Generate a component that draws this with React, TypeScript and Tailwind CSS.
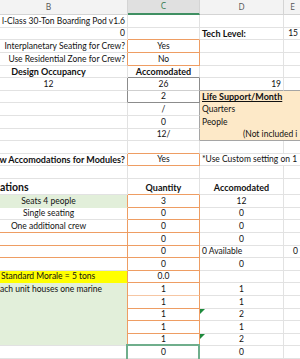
import React from 'react';

type P = { className?: string; children?: React.ReactNode };

function Cell({ className = '', children }: P) {
  return (
    <div className={`relative flex shrink-0 items-center overflow-hidden whitespace-nowrap border-b border-r ${className}`}>
      {children}
    </div>
  );
}

function Row({ className = 'h-[12.6px]', children }: P) {
  return <div className={`flex ${className}`}>{children}</div>;
}

function Tri() {
  return (
    <svg className="absolute left-0 top-0" width="5" height="5" viewBox="0 0 5 5">
      <polygon points="0,0 5,0 0,5" fill="#1e8a3c" />
    </svg>
  );
}

// widths: B 158 (starts at -30), C 72, D 84, E 18
export default function App() {
  return (
    <div className="h-[359px] w-[300px] overflow-hidden bg-white font-['Lato',sans-serif] text-[8.5px] leading-none text-[#111]">
      <div className="-ml-[30px] w-[360px]">
        {/* header */}
        <div className="flex h-[15.3px] bg-[#f3f3f3] font-['Open_Sans',sans-serif] text-[8.5px] text-[#555]">
          <div className="flex w-[158px] shrink-0 items-center justify-center border-b border-r border-b-[#d4d4d4] border-r-[#d4d4d4]">B</div>
          <div className="flex w-[72px] shrink-0 items-center justify-center border-b-2 border-r border-b-[#3f8f62] border-r-[#d4d4d4] bg-[#e0e0e0] text-[#2f7a4f]">C</div>
          <div className="flex w-[84px] shrink-0 items-center justify-center border-b border-r border-b-[#d4d4d4] border-r-[#d4d4d4]">D</div>
          <div className="flex w-[18px] shrink-0 items-center justify-center border-b border-r border-b-[#d4d4d4] border-r-[#d4d4d4]">E</div>
        </div>

        {/* 1 */}
        <Row>
          <Cell className="w-[158px] justify-end border-b-[#e2e2e2] border-r-[#e2e2e2] pr-[2px]">l-Class 30-Ton Boarding Pod v1.6</Cell>
          <Cell className="w-[72px] border-b-[#e2e2e2] border-r-[#e2e2e2]" />
          <Cell className="w-[84px] border-b-[#e2e2e2] border-r-[#e2e2e2]" />
          <Cell className="w-[18px] border-b-[#e2e2e2] border-r-[#e2e2e2]" />
        </Row>
        {/* 2 */}
        <Row>
          <Cell className="w-[158px] justify-end border-b-[#e2e2e2] border-r-[#e2e2e2] pr-[2px]">0</Cell>
          <Cell className="w-[72px] border-b-[#ee9d63] border-r-[#e2e2e2]" />
          <Cell className="w-[84px] border-b-[#e2e2e2] border-r-[#e2e2e2] pl-[2px] text-[9px] font-bold">Tech Level:</Cell>
          <Cell className="w-[18px] justify-end border-b-[#e2e2e2] border-r-[#e2e2e2] pr-[3px]">15</Cell>
        </Row>
        {/* 3 */}
        <Row>
          <Cell className="w-[158px] justify-end border-b-[#e2e2e2] border-r-[#ee9d63] pr-[2px]">Interplanetary Seating for Crew?</Cell>
          <Cell className="w-[72px] justify-center border-b-[#ee9d63] border-r-[#ee9d63]">Yes</Cell>
          <Cell className="w-[84px] border-b-[#e2e2e2] border-r-[#e2e2e2]" />
          <Cell className="w-[18px] border-b-[#e2e2e2] border-r-[#e2e2e2]" />
        </Row>
        {/* 4 */}
        <Row>
          <Cell className="w-[158px] justify-end border-b-[#e2e2e2] border-r-[#ee9d63] pr-[2px]">Use Residential Zone for Crew?</Cell>
          <Cell className="w-[72px] justify-center border-b-[#ee9d63] border-r-[#ee9d63]">No</Cell>
          <Cell className="w-[84px] border-b-[#e2e2e2] border-r-[#e2e2e2]" />
          <Cell className="w-[18px] border-b-[#e2e2e2] border-r-[#e2e2e2]" />
        </Row>
        {/* 5 */}
        <Row>
          <Cell className="w-[158px] justify-center border-b-[#e2e2e2] border-r-[#e2e2e2] text-[9px] font-bold">Design Occupancy</Cell>
          <Cell className="w-[72px] justify-center border-b-[#8c8c8c] border-r-[#e2e2e2] text-[9px] font-bold">Accomodated</Cell>
          <Cell className="w-[84px] border-b-[#e2e2e2] border-r-[#e2e2e2]" />
          <Cell className="w-[18px] border-b-[#e2e2e2] border-r-[#e2e2e2]" />
        </Row>
        {/* 6 */}
        <Row>
          <Cell className="w-[158px] justify-center border-b-[#e2e2e2] border-r-[#8c8c8c]">12</Cell>
          <Cell className="w-[72px] justify-center border-b-[#cfcfcf] border-r-[#8c8c8c]">26</Cell>
          <Cell className="w-[84px] justify-end border-b-[#a5a5a5] border-r-[#e2e2e2] pr-[2px]">19</Cell>
          <Cell className="w-[18px] border-b-[#a5a5a5] border-r-[#e2e2e2]" />
        </Row>
        {/* 7 */}
        <Row>
          <Cell className="w-[158px] border-b-[#e2e2e2] border-r-[#8c8c8c]" />
          <Cell className="w-[72px] justify-center border-b-[#8c8c8c] border-r-[#8c8c8c]">2</Cell>
          <Cell className="w-[102px] border-b-[#fde9c8] border-r-[#fde9c8] bg-[#fde9c8] pl-[2px] text-[9px] font-bold underline underline-offset-[1px]">Life Support/Month</Cell>
        </Row>
        {/* 8 */}
        <Row>
          <Cell className="w-[158px] border-b-[#e2e2e2] border-r-[#e2e2e2]" />
          <Cell className="w-[72px] justify-center border-b-[#e2e2e2] border-r-[#a5a5a5]">/</Cell>
          <Cell className="w-[102px] border-b-[#fde9c8] border-r-[#fde9c8] bg-[#fde9c8] pl-[2px]">Quarters</Cell>
        </Row>
        {/* 9 */}
        <Row>
          <Cell className="w-[158px] border-b-[#e2e2e2] border-r-[#e2e2e2]" />
          <Cell className="w-[72px] justify-center border-b-[#e2e2e2] border-r-[#a5a5a5]">0</Cell>
          <Cell className="w-[102px] border-b-[#fde9c8] border-r-[#fde9c8] bg-[#fde9c8] pl-[2px]">People</Cell>
        </Row>
        {/* 10 */}
        <Row>
          <Cell className="w-[158px] border-b-[#e2e2e2] border-r-[#e2e2e2]" />
          <Cell className="w-[72px] justify-center border-b-[#e2e2e2] border-r-[#a5a5a5]">12/</Cell>
          <Cell className="w-[102px] border-b-[#a5a5a5] border-r-[#fde9c8] bg-[#fde9c8] pl-[43px]">(Not included i</Cell>
        </Row>
        {/* 11 */}
        <Row>
          <Cell className="w-[158px] border-b-[#e2e2e2] border-r-[#e2e2e2]" />
          <Cell className="w-[72px] border-b-[#ee9d63] border-r-[#e2e2e2]" />
          <Cell className="w-[84px] border-b-[#e2e2e2] border-r-[#e2e2e2]" />
          <Cell className="w-[18px] border-b-[#e2e2e2] border-r-[#e2e2e2]" />
        </Row>
        {/* 12 */}
        <Row>
          <Cell className="w-[158px] justify-end border-b-[#e2e2e2] border-r-[#ee9d63] pr-[2px] text-[9px] font-bold">w Accomodations for Modules?</Cell>
          <Cell className="w-[72px] justify-center border-b-[#ee9d63] border-r-[#ee9d63]">Yes</Cell>
          <Cell className="w-[102px] border-b-[#e2e2e2] border-r-[#e2e2e2] pl-[2px]">*Use Custom setting on 1</Cell>
        </Row>
        {/* 13 */}
        <Row>
          <Cell className="w-[158px] border-b-[#e2e2e2] border-r-[#e2e2e2]" />
          <Cell className="w-[72px] border-b-[#e2e2e2] border-r-[#e2e2e2]" />
          <Cell className="w-[84px] border-b-[#e2e2e2] border-r-[#e2e2e2]" />
          <Cell className="w-[18px] border-b-[#e2e2e2] border-r-[#e2e2e2]" />
        </Row>
        {/* 14 */}
        <Row className="h-[16.2px]">
          <Cell className="w-[158px] items-end border-b-[#e2e2e2] border-r-[#e2e2e2] pb-[2px] pl-[30px] text-[10.5px] font-bold">ations</Cell>
          <Cell className="w-[72px] items-end justify-center border-b-[#ee9d63] border-r-[#e2e2e2] pb-[2px] text-[9px] font-bold">Quantity</Cell>
          <Cell className="w-[84px] items-end justify-center border-b-[#e2e2e2] border-r-[#e2e2e2] pb-[2px] text-[9px] font-bold">Accomodated</Cell>
          <Cell className="w-[18px] border-b-[#e2e2e2] border-r-[#e2e2e2]" />
        </Row>
        {/* 15 */}
        <Row>
          <Cell className="w-[158px] justify-center border-b-[#e2efda] border-r-[#ee9d63] bg-[#e2efda]">Seats 4 people</Cell>
          <Cell className="w-[72px] justify-center border-b-[#ee9d63] border-r-[#ee9d63]">3</Cell>
          <Cell className="w-[84px] justify-center border-b-[#e2e2e2] border-r-[#e2e2e2]">12</Cell>
          <Cell className="w-[18px] border-b-[#e2e2e2] border-r-[#e2e2e2]" />
        </Row>
        {/* 16 */}
        <Row>
          <Cell className="w-[158px] justify-center border-b-[#e2e2e2] border-r-[#ee9d63]">Single seating</Cell>
          <Cell className="w-[72px] justify-center border-b-[#ee9d63] border-r-[#ee9d63]">0</Cell>
          <Cell className="w-[84px] justify-center border-b-[#e2e2e2] border-r-[#e2e2e2]">0</Cell>
          <Cell className="w-[18px] border-b-[#e2e2e2] border-r-[#e2e2e2]" />
        </Row>
        {/* 17 */}
        <Row>
          <Cell className="w-[158px] justify-center border-b-[#ee9d63] border-r-[#ee9d63]">One additional crew</Cell>
          <Cell className="w-[72px] justify-center border-b-[#ee9d63] border-r-[#ee9d63]">0</Cell>
          <Cell className="w-[84px] justify-center border-b-[#e2e2e2] border-r-[#e2e2e2]">0</Cell>
          <Cell className="w-[18px] border-b-[#e2e2e2] border-r-[#e2e2e2]" />
        </Row>
        {/* 18 */}
        <Row>
          <Cell className="w-[158px] border-b-[#ee9d63] border-r-[#ee9d63]" />
          <Cell className="w-[72px] justify-center border-b-[#ee9d63] border-r-[#ee9d63]">0</Cell>
          <Cell className="w-[84px] justify-center border-b-[#e2e2e2] border-r-[#e2e2e2]">0</Cell>
          <Cell className="w-[18px] border-b-[#e2e2e2] border-r-[#e2e2e2]" />
        </Row>
        {/* 19 */}
        <Row>
          <Cell className="w-[158px] border-b-[#ee9d63] border-r-[#ee9d63]" />
          <Cell className="w-[72px] justify-center border-b-[#ee9d63] border-r-[#ee9d63]">0</Cell>
          <Cell className="w-[84px] border-b-[#e2e2e2] border-r-[#e2e2e2] pl-[2px]">0 Available</Cell>
          <Cell className="w-[18px] justify-end border-b-[#e2e2e2] border-r-[#e2e2e2] pr-[3px]">0</Cell>
        </Row>
        {/* 20 */}
        <Row>
          <Cell className="w-[158px] border-b-[#e2e2e2] border-r-[#ee9d63]" />
          <Cell className="w-[72px] justify-center border-b-[#ee9d63] border-r-[#ee9d63]">0</Cell>
          <Cell className="w-[84px] justify-center border-b-[#e2e2e2] border-r-[#e2e2e2]">0</Cell>
          <Cell className="w-[18px] border-b-[#e2e2e2] border-r-[#e2e2e2]" />
        </Row>
        {/* 21 */}
        <Row>
          <Cell className="w-[158px] border-b-[#ffff00] border-r-[#ee9d63] bg-[#ffff00] pl-[31px]">Standard Morale = 5 tons</Cell>
          <Cell className="w-[72px] justify-center border-b-[#ee9d63] border-r-[#ee9d63]">0.0</Cell>
          <Cell className="w-[84px] border-b-[#e2e2e2] border-r-[#e2e2e2]" />
          <Cell className="w-[18px] border-b-[#e2e2e2] border-r-[#e2e2e2]" />
        </Row>
        {/* 22-26 */}
        <div className="flex">
          <div className="flex h-[63px] w-[158px] shrink-0 items-start overflow-hidden whitespace-nowrap border-b border-r border-b-[#e2e2e2] border-r-[#ee9d63] bg-[#e2efda] pl-[30px] pt-[2px]">
            ach unit houses one marine
          </div>
          <div className="flex flex-col">
            <Row>
              <Cell className="w-[72px] justify-center border-b-[#f6c6a3] border-r-[#ee9d63]">1</Cell>
              <Cell className="w-[84px] justify-center border-b-[#e2e2e2] border-r-[#e2e2e2]">1</Cell>
              <Cell className="w-[18px] border-b-[#e2e2e2] border-r-[#e2e2e2]" />
            </Row>
            <Row>
              <Cell className="w-[72px] justify-center border-b-[#ee9d63] border-r-[#ee9d63]">1</Cell>
              <Cell className="w-[84px] justify-center border-b-[#e2e2e2] border-r-[#e2e2e2]">1</Cell>
              <Cell className="w-[18px] border-b-[#e2e2e2] border-r-[#e2e2e2]" />
            </Row>
            <Row>
              <Cell className="w-[72px] justify-center border-b-[#ee9d63] border-r-[#ee9d63]">1</Cell>
              <Cell className="w-[84px] justify-center border-b-[#e2e2e2] border-r-[#e2e2e2]"><Tri />2</Cell>
              <Cell className="w-[18px] border-b-[#e2e2e2] border-r-[#e2e2e2]" />
            </Row>
            <Row>
              <Cell className="w-[72px] justify-center border-b-[#ee9d63] border-r-[#ee9d63]">1</Cell>
              <Cell className="w-[84px] justify-center border-b-[#e2e2e2] border-r-[#e2e2e2]">1</Cell>
              <Cell className="w-[18px] border-b-[#e2e2e2] border-r-[#e2e2e2]" />
            </Row>
            <Row>
              <Cell className="w-[72px] justify-center border-b-[#e2e2e2] border-r-[#ee9d63]">1</Cell>
              <Cell className="w-[84px] justify-center border-b-[#e2e2e2] border-r-[#e2e2e2]"><Tri />2</Cell>
              <Cell className="w-[18px] border-b-[#e2e2e2] border-r-[#e2e2e2]" />
            </Row>
          </div>
        </div>
        {/* 27 */}
        <Row>
          <Cell className="w-[158px] border-b-[#e2e2e2] border-r-[#e2e2e2]" />
          <Cell className="w-[72px] justify-center overflow-visible border-b-[#e2e2e2] border-r-[#e2e2e2]">
            <div className="absolute -left-[2px] -right-[1px] -top-[2px] bottom-[-4px] border-2 border-[#6fae8c]" />
            0
          </Cell>
          <Cell className="w-[84px] justify-center border-b-[#e2e2e2] border-r-[#e2e2e2]">0</Cell>
          <Cell className="w-[18px] border-b-[#e2e2e2] border-r-[#e2e2e2]" />
        </Row>
      </div>
    </div>
  );
}
